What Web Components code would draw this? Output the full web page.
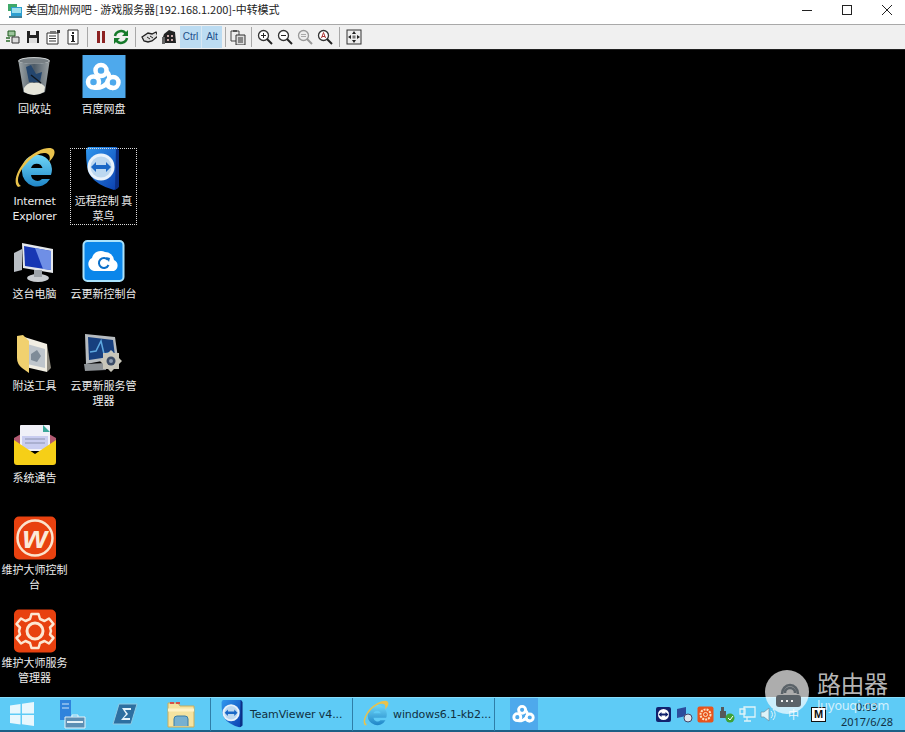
<!DOCTYPE html>
<html lang="zh"><head><meta charset="utf-8"><title>远程</title>
<style>
html,body{margin:0;padding:0;background:#000;overflow:hidden}
body{width:905px;height:732px;font-family:"Noto Sans CJK SC","Noto Sans",sans-serif}
</style></head><body>
<rd-window>
  <rd-titlebar slot="title" text="美国加州网吧 - 游戏服务器[192.168.1.200]-中转模式"></rd-titlebar>
  <rd-toolbar slot="tools"></rd-toolbar>
  <rd-desktop slot="desk">
    <desk-icon icon="recycle" label="回收站"></desk-icon>
    <desk-icon icon="baidu" label="百度网盘"></desk-icon>
    <desk-icon icon="ie" label="Internet Explorer"></desk-icon>
    <desk-icon icon="tv" label="远程控制 真菜鸟" selected></desk-icon>
    <desk-icon icon="pc" label="这台电脑"></desk-icon>
    <desk-icon icon="cloud" label="云更新控制台"></desk-icon>
    <desk-icon icon="folder" label="附送工具"></desk-icon>
    <desk-icon icon="svc" label="云更新服务管理器"></desk-icon>
    <desk-icon icon="mail" label="系统通告"></desk-icon>
    <desk-icon class="gap"></desk-icon>
    <desk-icon icon="wd" label="维护大师控制台"></desk-icon>
    <desk-icon class="gap"></desk-icon>
    <desk-icon icon="gear" label="维护大师服务管理器"></desk-icon>
  </rd-desktop>
  <rd-taskbar slot="bar"></rd-taskbar>
</rd-window>
<rd-watermark></rd-watermark>
<script>
const CLOUD=`<g fill="none" stroke="#fff" stroke-width="4.500"><circle cx="19" cy="15.500" r="5.500"/><circle cx="11.500" cy="27" r="5.500"/><circle cx="31" cy="27.500" r="5.500"/><path d="M24 16.500 Q27 18 27.500 23"/><path d="M12 32.500 Q20 33.500 24 29 Q27 33 31 33"/></g>`;
const ICONS={
recycle:`<svg viewBox="0 0 44 44"><defs><linearGradient id="rb" x1="0" x2="1"><stop offset="0" stop-color="#9fa6a8"/><stop offset=".5" stop-color="#4c5a66"/><stop offset="1" stop-color="#9aa0a2"/></linearGradient></defs><ellipse cx="21" cy="6" rx="15.500" ry="3.400" fill="#777f84" stroke="#d5d9da" stroke-width="1"/><path d="M5.500 7 L10.500 37 Q21 43 32 37 L36.500 7 Q21 11 5.500 7Z" fill="url(#rb)"/><path d="M13 12 L18 10 L23 19 L29 17 L27 27 L16 27Z" fill="#24466e"/><path d="M11 33 Q15 27 21 28 Q28 27 32 32 L31 37 Q21 43 11 37Z" fill="#e5e5da"/><path d="M18 20 L28 28" stroke="#101820" stroke-width="1.500"/></svg>`,
baidu:`<svg viewBox="0 0 44 44"><rect width="43" height="43" x="0.500" fill="#4ea9ec"/>${CLOUD}</svg>`,
ie:`<svg viewBox="0 0 44 44"><defs><linearGradient id="ieb" x1="0" y1="0" x2="0" y2="1"><stop offset="0" stop-color="#6fd6f7"/><stop offset="1" stop-color="#1f86c8"/></linearGradient></defs><path d="M9 24 A15 15 0 1 1 38 28 L18 28 A6.500 6.500 0 0 0 29 32 L37 32 A15 15 0 0 1 9 24Z M18 21 H29.500 A6 6 0 0 0 18 21Z" fill="url(#ieb)" fill-rule="evenodd"/><path d="M5 40 C0 36 3 24 13 13 C23 3 37 -2 41 3 C43 7 39 12 36 15 C38 9 36 6 31 6 C22 6 10 18 6 28 C4 33 5 37 8 39Z" fill="#e9c24c"/></svg>`,
tv:`<svg viewBox="0 0 44 44"><defs><linearGradient id="tvb" x1="0" y1="0" x2="1" y2="1"><stop offset="0" stop-color="#2f97ee"/><stop offset="1" stop-color="#0b3fb0"/></linearGradient></defs><path d="M6 0 H35 L36 2 V41 L32 43 Q14 38 8 28 Q4 22 4 3Z" fill="url(#tvb)"/><path d="M34 0 L37 3 V40 L33 43Z" fill="#0b2f86"/><circle cx="19" cy="20" r="13.500" fill="#e8f2fb"/><circle cx="19" cy="20" r="10.500" fill="#bcd8f0"/><path d="M9 20 L14 15 V18 H24 V15 L29 20 L24 25 V22 H14 V25Z" fill="#1967c6"/></svg>`,
pc:`<svg viewBox="0 0 44 44"><path d="M1 13 L9 9 L9 30 L1 32Z" fill="#b9bec4"/><path d="M9 3 L40 9 V33 L10 28Z" fill="#e5e8ec"/><path d="M11 6 L38 11 V30 L12 26Z" fill="#1737b4"/><path d="M22 8 L38 11 V30 L30 29Z" fill="#6f8fe6"/><ellipse cx="25" cy="38" rx="11" ry="4" fill="#c9cdd2"/><rect x="21" y="30" width="8" height="7" fill="#9da3aa"/></svg>`,
cloud:`<svg viewBox="0 0 44 44"><rect x="1.500" y="1" width="40" height="40" rx="4" fill="#0a86ea" stroke="#a9e2fb" stroke-width="2"/><path d="M12 31 A7 7 0 0 1 10 18 A9 9 0 0 1 23 12 A9 9 0 0 1 32 20 A6 6 0 0 1 32 31Z" fill="#fff"/><path d="M26 20 A5 5 0 1 0 26.500 25" fill="none" stroke="#0a6fc9" stroke-width="2"/><path d="M24 17 L28 18 L27 22Z" fill="#0a6fc9"/></svg>`,
folder:`<svg viewBox="0 0 44 44"><path d="M8 4 L34 12 L34 40 L8 34Z" fill="#f1eee3"/><path d="M14 12 L32 17 V36 L14 32Z" fill="#bfc6cc"/><path d="M18 22 l6 -4 l4 6 l-4 6 l-6 -2Z" fill="#7f8c98"/><path d="M4 4 L10 3 L16 9 V41 L9 36 Q4 32 4 26Z" fill="#f1d16f"/><path d="M34 12 L38 36 L34 40Z" fill="#8e8a7e"/></svg>`,
svc:`<svg viewBox="0 0 44 44"><path d="M3 2 L33 5 L36 26 L4 32Z" fill="#b7bcc0"/><path d="M6 5 L31 8 L33 24 L7 28Z" fill="#173f7e"/><path d="M8 20 L14 19 L19 9 L22 22 L31 20" fill="none" stroke="#5ea8e0" stroke-width="1.500"/><path d="M2 32 L24 31 L24 38 L3 39Z" fill="#8e9397"/><g transform="translate(29 29)"><path d="M0 -11 L3 -8 L8 -8 L8 -3 L11 0 L8 3 L8 8 L3 8 L0 11 L-3 8 L-8 8 L-8 3 L-11 0 L-8 -3 L-8 -8 L-3 -8Z" fill="#c8c6ba"/><circle r="4.500" fill="#3c4c66"/><circle r="2" fill="#8b9bb0"/></g></svg>`,
mail:`<svg viewBox="0 0 44 44"><path d="M1 14 L22 2 L43 14 V25 H1Z" fill="#b15a72"/><rect x="7" y="1" width="30" height="26" rx="1" fill="#f0f0f8"/><path d="M30 1 L37 8 H30Z" fill="#3aa79a"/><rect x="9" y="12" width="26" height="13" fill="#c9cdf0"/><path d="M12 15H32M12 19H32" stroke="#8c93b0" stroke-width="1"/><path d="M1 16 L22 30 L43 16 V38 Q43 41 40 41 H4 Q1 41 1 38Z" fill="#f6cf17"/></svg>`,
wd:`<svg viewBox="0 0 44 44"><rect x="1" y="0.500" width="42" height="43" rx="5" fill="#e8410f"/><circle cx="22" cy="22" r="17.500" fill="none" stroke="#fbe3cc" stroke-width="2.500"/><text x="22" y="32" text-anchor="middle" font-family="Liberation Sans,sans-serif" font-weight="700" font-style="italic" font-size="32" fill="#fbe9d8">w</text></svg>`,
gear:`<svg viewBox="0 0 44 44"><rect x="1" y="0.500" width="42" height="43" rx="5" fill="#e8410f"/><g fill="none" stroke="#fde7d2"><circle cx="22" cy="22" r="8" stroke-width="3"/><path stroke-width="2.500" stroke-linejoin="round" d="M18.500 5 H25.500 L27 10 L31.500 12 L36 9.500 L40.500 15 L37 18.500 L38 22 L37 25.500 L40.500 29 L36 34.500 L31.500 32 L27 34 L25.500 39 H18.500 L17 34 L12.500 32 L8 34.500 L3.500 29 L7 25.500 L6 22 L7 18.500 L3.500 15 L8 9.500 L12.500 12 L17 10Z"/></g></svg>`
};
function def(name,css,html,init){
  customElements.define(name,class extends HTMLElement{
    connectedCallback(){
      if(this.shadowRoot)return;
      const r=this.attachShadow({mode:'open'});
      r.innerHTML=`<style>${css}</style>`+(typeof html==='function'?html(this):html);
      if(init)init(this,r);
    }
  });
}
def('rd-window',`:host{display:grid;grid-template-rows:25px 25px 647px 35px;width:905px;height:732px}`,
`<slot name="title"></slot><slot name="tools"></slot><slot name="desk"></slot><slot name="bar"></slot>`);

def('rd-titlebar',`:host{display:flex;align-items:center;background:#fff;border-bottom:1px solid #a9a9a9;box-sizing:border-box;height:25px;color:#222;font-size:11px}
.ic{width:16px;height:16px;margin:0 3px 3px 7px;flex:none}
.t{flex:1;padding-bottom:6px;white-space:nowrap;line-height:14px;letter-spacing:-.05px}
.b{width:40px;height:24px;display:flex;align-items:center;justify-content:center;margin-bottom:5px;flex:none}
.c{display:flex;margin-right:-2px}`,
t=>`<svg class="ic" viewBox="0 0 16 16"><rect x="1" y="1" width="9" height="7" fill="#3fa96a"/><rect x="4" y="4" width="11" height="9" fill="#2f9fd0"/><rect x="5" y="5" width="9" height="5" fill="#9fe0ee"/><rect x="2" y="13" width="13" height="2" fill="#3f7f9a"/></svg><div class="t">${t.getAttribute('text')}</div>
<div class="c"><div class="b"><svg width="12" height="12"><path d="M1 6.500H11" stroke="#222"/></svg></div><div class="b"><svg width="12" height="12"><rect x="1.500" y="1.500" width="9" height="9" fill="none" stroke="#222"/></svg></div><div class="b"><svg width="14" height="14"><path d="M2 2L12 12M12 2L2 12" stroke="#222" stroke-width="1"/></svg></div></div>`);

const T={
 a:`<path d="M3 2h7v5H3z" fill="#9cc59c" stroke="#1e5a1e"/><path d="M7 8h7v6H7z" fill="#ddd" stroke="#333"/><path d="M1 9h4M1 12h4" stroke="#2a6a2a" stroke-width="1.500"/>`,
 save:`<path d="M2 2h12v12H2z" fill="#222"/><path d="M5 2h6v4H5z" fill="#eee"/><path d="M4 9h8v5H4z" fill="#ddd"/>`,
 prop:`<path d="M2 4h11v11H2z" fill="#fff" stroke="#333"/><path d="M5 2h6v3H5z" fill="#777"/><path d="M4 7h7M4 9.500h7M4 12h7" stroke="#333"/><path d="M12 1h3v3h-3z" fill="#333"/>`,
 info:`<path d="M3 1h10v14H3z" fill="#fff" stroke="#333"/><path d="M7 3h2v2H7zM6 6h3v6h1v1H6v-1h1V7H6z" fill="#222"/>`,
 pause:`<path d="M4 2h3v12H4zM9 2h3v12H9z" fill="#8c2222"/>`,
 ref:`<path d="M2 7 A6 6 0 0 1 13 5" fill="none" stroke="#157a2a" stroke-width="2.500"/><path d="M15 1v6H9z" fill="#157a2a"/><path d="M14 9 A6 6 0 0 1 3 11" fill="none" stroke="#157a2a" stroke-width="2.500"/><path d="M1 15V9h6z" fill="#157a2a"/>`,
 shake:`<path d="M1 8 L7 4 L11 5 L15 3 L17 7 L11 12 L7 13 L3 12Z" fill="#ddd" stroke="#222" stroke-width="1.300"/><path d="M6 8l3 2M9 7l3 2" stroke="#222"/>`,
 head:`<path d="M3 5 L8 1 L14 3 L15 14 H2 L2 8Z" fill="#222"/><path d="M1 8 h3 v7 H1z" fill="#666"/><path d="M6 6h2v2H6zM10 6h2v2h-2zM6 10h2v2H6zM10 10h2v2h-2z" fill="#caa"/>`,
 copy:`<path d="M1 2h8v10H1z" fill="#eee" stroke="#444"/><path d="M6 6h9v10H6z" fill="#ddd" stroke="#333"/><path d="M8 9h5M8 11h5M8 13h5" stroke="#333"/><path d="M3 1h4v2H3z" fill="#555"/>`,
 zi:`<circle cx="6.500" cy="6.500" r="5" fill="#fff" stroke="#333" stroke-width="1.300"/><path d="M10 10l5 5" stroke="#222" stroke-width="2"/><path d="M4 6.500h5M6.500 4v5" stroke="#222"/>`,
 zo:`<circle cx="6.500" cy="6.500" r="5" fill="#fff" stroke="#333" stroke-width="1.300"/><path d="M10 10l5 5" stroke="#222" stroke-width="2"/><path d="M4 6.500h5" stroke="#222"/>`,
 z1:`<circle cx="6.500" cy="6.500" r="5" fill="#eee" stroke="#999" stroke-width="1.300"/><path d="M10 10l5 5" stroke="#999" stroke-width="2"/><path d="M4 5.500h5M4 7.500h5" stroke="#aaa"/>`,
 za:`<circle cx="6.500" cy="6.500" r="5" fill="#fff" stroke="#333" stroke-width="1.300"/><path d="M10 10l5 5" stroke="#222" stroke-width="2"/><path d="M4.500 9L6.500 3.500L8.500 9M5 7.500h3" fill="none" stroke="#a33"/>`,
 full:`<rect x="1" y="1" width="14" height="14" fill="#eee" stroke="#333"/><path d="M8 2l2 3H6zM8 14l2-3H6zM2 8l3-2v4zM14 8l-3-2v4z" fill="#222"/><rect x="6.500" y="6.500" width="3" height="3" fill="#777"/>`
};
def('rd-toolbar',`:host{display:flex;align-items:center;background:#f0f0f0;border-bottom:1px solid #222;box-sizing:border-box;height:25px;padding-left:3px;padding-bottom:1px;color:#1c4f8a}
.i{width:20px;height:22px;display:flex;align-items:center;justify-content:center;flex:none}
.i svg{width:16px;height:16px}
.s{flex:none;display:flex;justify-content:center}
.s::before{content:"";width:1px;height:20px;background:#a8a8a8}
.k{flex:none;height:22px;width:21px;background:#bcdcf2;display:flex;align-items:center;justify-content:center;font:10px "Liberation Sans",sans-serif}
.k+.k{border-left:1px solid #d8e8f4;width:20px}`,
()=>{const i=n=>`<div class="i"><svg viewBox="0 0 16 16">${T[n]}</svg></div>`,s=w=>`<div class="s" style="width:${w}px"></div>`;
return i('a')+i('save')+i('prop')+i('info')+s(8)+i('pause')+i('ref')+s(8)+i('shake')+i('head')+`<div style="width:1px"></div><div class="k">Ctrl</div><div class="k">Alt</div>`+s(6)+i('copy')+s(7)+i('zi')+i('zo')+i('z1')+i('za')+s(9)+i('full');});

def('rd-desktop',`:host{display:grid;grid-template-columns:69px 69px;grid-auto-rows:92.25px;background:#000;align-content:start;justify-content:start;height:647px;overflow:hidden}`,`<slot></slot>`);

def('desk-icon',`:host{display:flex;flex-direction:column;align-items:center;color:#ececec;font-size:11px;line-height:15px;text-align:center;position:relative}
.im{width:44px;height:44px;margin-top:5px;flex:none}
.im svg{width:44px;height:44px;display:block}
.l{width:67px;margin-top:2px;text-shadow:0 1px 2px #000;font-family:"Noto Sans CJK SC","Noto Sans",sans-serif}
:host([icon="ie"]) .l{font-family:"DejaVu Sans",sans-serif;font-size:11px;letter-spacing:-.2px;margin-top:3px}
:host([selected])::after{content:"";position:absolute;left:1px;right:1px;top:5.750px;height:77px;border:1px dotted #ddd;box-sizing:border-box}`,
t=>{const n=t.getAttribute('icon');return n?`<div class="im">${ICONS[n]}</div><div class="l">${t.getAttribute('label')}</div>`:''});

def('task-btn',`:host{display:flex;align-items:center;flex:none;height:33px;box-sizing:border-box;border-right:1px solid #2f7ea8;color:#10303f;font:11px "DejaVu Sans",sans-serif;white-space:nowrap;letter-spacing:-.1px}
svg{width:28px;height:28px;margin:0 3px 0 8px;flex:none}`,
t=>`${ICONS[t.getAttribute('icon')].replace(/id="(\w+)"/g,'id="$1b"').replace(/url\(#(\w+)\)/g,'url(#$1b)')}<span>${t.getAttribute('text')}</span>`);

def('rd-taskbar',`:host{display:flex;align-items:center;background:#5ecbf6;border-top:1px solid #86dcfa;border-bottom:2px solid #1d5f86;box-sizing:border-box;height:35px;color:#16384c;position:relative}
.st{width:44px;display:flex;justify-content:center;flex:none}
.p{flex:none;width:54px;display:flex;justify-content:center}
.sep{width:1px;height:33px;background:#2f7ea8;flex:none}
.tile{width:28px;height:32px;background:#4ea9ec;flex:none;display:flex;align-items:center;justify-content:center}
.tray{display:flex;margin-left:auto;align-items:center;flex:none}
.tr{width:21px;height:20px;display:flex;align-items:center;justify-content:center;flex:none}
.tr svg{width:17px;height:17px}
.m{width:15px;height:15px;background:#fff;border:1px solid #111;box-sizing:border-box;font:700 11px "Liberation Sans",sans-serif;color:#111;display:flex;align-items:center;justify-content:center}
.im{font:11px "Noto Sans CJK SC",sans-serif;color:#e9f5fb}
.clk{width:62px;margin-left:7px;margin-right:7px;text-align:center;font:11px/15px "Noto Sans",sans-serif;color:#123245}`,
()=>`<div class="st"><svg width="24" height="24" viewBox="0 0 24 24" fill="#e8f7fd"><path d="M0 3.500L10.500 2V11.500H0ZM12 1.800L24 0V11.500H12ZM0 13H10.500V22.500L0 21ZM12 13H24V24L12 22.300Z"/></svg></div>
<div class="p"><svg width="30" height="30" viewBox="0 0 30 30"><path d="M4 1h11v20H4z" fill="#2f83dc"/><path d="M6 5h7M6 9h7" stroke="#cfe6fa"/><path d="M9 18h20v11H9z" fill="#5c8fb4" stroke="#e6f2f8"/><path d="M11 23h16" stroke="#e6f2f8" stroke-width="2"/><path d="M16 18v-2h6v2" fill="none" stroke="#e6f2f8"/></svg></div>
<div class="p"><svg width="26" height="24" viewBox="0 0 26 24"><path d="M7 2H25L19 22H1Z" fill="#2d6fa0" stroke="#8fcbe4"/><path d="M10 6h9v2h-6l3 4-4 4h6v2H9l5-6Z" fill="#e6f4fb"/></svg></div>
<div class="p" style="width:58px"><svg width="30" height="28" viewBox="0 0 30 28"><path d="M2 3h10l2 3h14v21H2z" fill="#f5e3a0" stroke="#c9ad5c"/><path d="M4 3h4M10 3h4" stroke="#d6524a" stroke-width="2"/><path d="M2 10h26" stroke="#fff3c6" stroke-width="3"/><path d="M8 26v-7a3 3 0 0 1 3-3h8a3 3 0 0 1 3 3v7" fill="#77b0d0" stroke="#3a7da6"/></svg></div>
<div class="sep"></div>
<task-btn icon="tv" text="TeamViewer v4..." style="width:142px"></task-btn>
<div style="width:1px;flex:none"></div>
<task-btn icon="ie" text="windows6.1-kb2..." style="width:141px"></task-btn>
<div class="tile" style="margin-left:15px"><svg width="28" height="28" viewBox="0 0 44 44">${CLOUD}</svg></div>
<div class="tray">
<div class="tr"><svg viewBox="0 0 17 17"><rect x="1" y="1" width="15" height="15" rx="2" fill="#12226e"/><circle cx="8.500" cy="8.500" r="5.500" fill="#fff"/><path d="M3.500 8.500l3-2.500v1.500h4V6l3 2.500-3 2.500V9.500h-4V11z" fill="#12226e"/></svg></div>
<div class="tr"><svg viewBox="0 0 17 17"><path d="M1 3l9-2v9l-9 2z" fill="#2c4c9c"/><circle cx="12" cy="12" r="4" fill="#dfe6ee" stroke="#446"/></svg></div>
<div class="tr"><svg viewBox="0 0 17 17"><rect x="0.500" y="0.500" width="16" height="16" rx="2" fill="#e8541c"/><circle cx="8.500" cy="8.500" r="5" fill="none" stroke="#fde0c0" stroke-width="2" stroke-dasharray="2 1"/><circle cx="8.500" cy="8.500" r="2" fill="none" stroke="#fde0c0"/></svg></div>
<div class="tr"><svg viewBox="0 0 17 17"><path d="M3 1h3v4h2v7H2V5h1z" fill="#55585a"/><circle cx="12" cy="12" r="4.500" fill="#3fa235"/><path d="M10 12l2 2 3-4" fill="none" stroke="#fff"/></svg></div>
<div class="tr"><svg viewBox="0 0 17 17"><path d="M5 1h11v10H5z" fill="none" stroke="#dff3f8" stroke-width="1.300"/><path d="M1 3h5v5H1z" fill="none" stroke="#dff3f8" stroke-width="1.300"/><path d="M8 11v4M5 15h7" stroke="#dff3f8" stroke-width="1.300"/></svg></div>
<div class="tr"><svg viewBox="0 0 17 17"><path d="M1 6h3l5-4v13l-5-4H1z" fill="#dff3f8" stroke="#6c8fa0" stroke-width=".7"/><path d="M11 5a5 5 0 0 1 0 7M13 3a8 8 0 0 1 0 11" fill="none" stroke="#dff3f8"/></svg></div>
<div class="tr im" style="margin-left:4px;">中</div>
<div class="tr" style="margin-left:4px;"><div class="m">M</div></div>
<div class="clk"><div>0:03</div><div>2017/6/28</div></div>
</div>`);

def('rd-watermark',`:host{position:absolute;left:765px;top:669px;display:flex;gap:9px;pointer-events:none}
.c{width:44px;height:44px;border-radius:50%;background:rgba(255,255,255,.68);flex:none;margin-top:1px}
.c svg{display:block}
.t{display:flex;flex-direction:column;margin-left:-1px}
.a{font:24px/28px "Noto Sans CJK SC",sans-serif;color:rgba(215,215,215,.85);letter-spacing:-.5px}
.b{font:12.500px/17px "DejaVu Sans",sans-serif;color:rgba(255,255,255,.72);margin-top:0;letter-spacing:-.4px}`,
`<div class="c"><svg viewBox="0 0 44 44" width="44" height="44"><path d="M14 25h19a3 3 0 0 1 3 3v6a3 3 0 0 1-3 3H14a3 3 0 0 1-3-3v-6a3 3 0 0 1 3-3Z" fill="#5a6268"/><path d="M17 24a8 9 0 0 1 16 0M20 23a5 5 0 0 1 10 0" fill="none" stroke="#5a6268" stroke-width="2.500"/><path d="M16 31h2M21 31h2M26 31h2" stroke="#eee" stroke-width="2"/></svg></div><div class="t"><div class="a">路由器</div><div class="b">luyouqi.com</div></div>`);
</script>
</body></html>
